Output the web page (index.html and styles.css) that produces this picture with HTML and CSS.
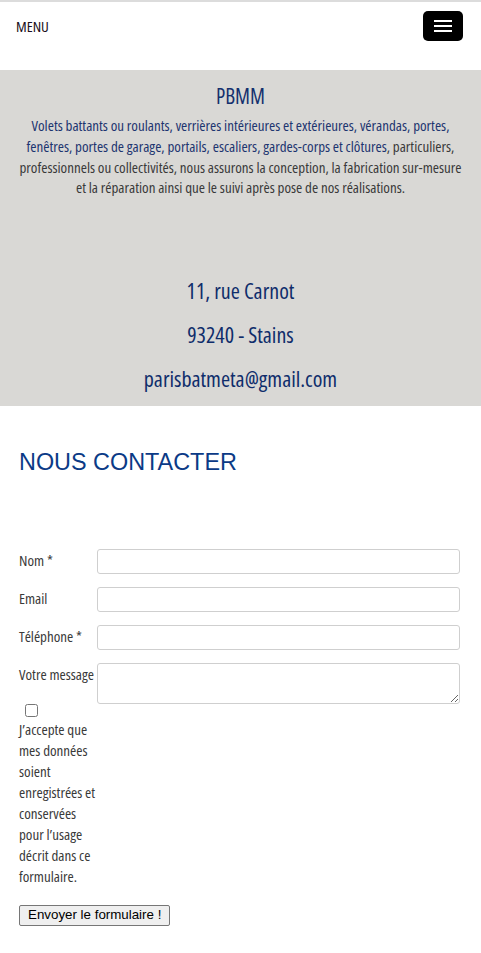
FILE: index.html
```html
<!DOCTYPE html>
<html lang="fr">
<head>
<meta charset="utf-8">
<title>PBMM - Nous contacter</title>
<link rel="stylesheet" href="styles.css">
</head>
<body>
<header class="topbar">
  <span class="menu-label">MENU</span>
  <button class="burger" type="button" aria-label="Menu">
    <span></span><span></span><span></span>
  </button>
</header>

<section class="band">
  <h1 class="brand">PBMM</h1>
  <p class="intro"><span class="blue">Volets battants ou roulants, verrières intérieures et extérieures, vérandas, portes, fenêtres, portes de garage, portails, escaliers, gardes-corps et clôtures</span>, particuliers, professionnels ou collectivités, nous assurons la conception, la fabrication sur-mesure et la réparation ainsi que le suivi après pose de nos réalisations.</p>
  <div class="address">
    <p>11, rue Carnot</p>
    <p>93240 - Stains</p>
    <p>parisbatmeta@gmail.com</p>
  </div>
</section>

<main class="contact">
  <h2 class="contact-title">NOUS CONTACTER</h2>
  <form class="form">
    <div class="row">
      <label class="lbl" for="nom">Nom *</label>
      <input class="field" id="nom" type="text">
    </div>
    <div class="row">
      <label class="lbl" for="email">Email</label>
      <input class="field" id="email" type="text">
    </div>
    <div class="row">
      <label class="lbl" for="tel">Téléphone *</label>
      <input class="field" id="tel" type="text">
    </div>
    <div class="row row-msg">
      <label class="lbl" for="msg">Votre message</label>
      <textarea class="field area" id="msg"></textarea>
    </div>
    <div class="consent">
      <input class="check" type="checkbox" id="rgpd">
      <label class="consent-text" for="rgpd">J’accepte que mes données soient enregistrées et conservées pour l’usage décrit dans ce formulaire.</label>
    </div>
    <button class="submit" type="button">Envoyer le formulaire !</button>
  </form>
</main>
</body>
</html>
```

FILE: styles.css
```css
html, body {
  margin: 0;
  padding: 0;
  background: #ffffff;
}

body {
  font-family: "Open Sans", sans-serif;
  font-stretch: 75%;
}

.topbar {
  border-top: 2px solid #dcdcdc;
  height: 68px;
  display: flex;
  align-items: flex-start;
  justify-content: space-between;
  padding: 0 18px 0 16px;
}

.menu-label {
  margin-top: 15px;
  font-size: 15px;
  line-height: 18px;
  color: #1a1020;
}

.burger {
  margin-top: 9px;
  width: 40px;
  height: 30px;
  border: none;
  border-radius: 5px;
  background: #000000;
  display: flex;
  flex-direction: column;
  align-items: center;
  justify-content: center;
  gap: 3px;
  padding: 0;
}

.burger span {
  display: block;
  width: 18px;
  height: 2px;
  background: #ffffff;
}

.band {
  background: #d9d8d5;
  height: 336px;
  box-sizing: border-box;
  padding: 13px 14px 0;
  text-align: center;
  overflow: hidden;
}

.brand {
  margin: 0;
  font-size: 21px;
  line-height: 26px;
  font-weight: 500;
  color: #14306e;
}

.intro {
  margin: 6px 0 0;
  font-size: 15px;
  line-height: 20.8px;
  color: #3a3a3a;
}

.intro .blue {
  color: #1d3570;
}

.address {
  margin-top: 70px;
}

.address p {
  margin: 0;
  font-size: 22px;
  line-height: 44px;
  font-weight: 500;
  color: #0f2d6b;
}

.contact {
  padding: 0 21px 0 19px;
}

.contact-title {
  margin: 41px 0 0;
  font-family: "Liberation Sans", Arial, sans-serif;
  font-stretch: normal;
  font-weight: normal;
  font-size: 23.4px;
  line-height: 30px;
  color: #0b3a86;
}

.form {
  margin-top: 72px;
}

.row {
  display: flex;
  align-items: flex-start;
  margin-bottom: 13px;
}

.lbl {
  width: 78px;
  flex: none;
  font-size: 15px;
  line-height: 20px;
  color: #3a3a3a;
  padding-top: 1px;
}

.field {
  flex: 1;
  min-width: 0;
  height: 25px;
  box-sizing: border-box;
  border: 1px solid #cfcfcf;
  border-radius: 3px;
  background: #fff;
  margin: 0;
}

.area {
  height: 41px;
  resize: vertical;
  font-family: inherit;
}

.row-msg {
  margin-bottom: 0;
}

.consent {
  width: 78px;
  display: flex;
  flex-direction: column;
  align-items: flex-start;
}

.check {
  margin: 0 0 0 6px;
  width: 13px;
  height: 13px;
}

.consent-text {
  margin-top: 2px;
  font-size: 15px;
  line-height: 21px;
  color: #3a3a3a;
}

.submit {
  margin-top: 18px;
  font-family: "Liberation Sans", Arial, sans-serif;
  font-stretch: normal;
  font-size: 13.33px;
  line-height: 16px;
  color: #000;
  padding: 1px 8px 2px;
  border: 1px solid #767676;
  border-radius: 2px;
  background: #efefef;
}
```
